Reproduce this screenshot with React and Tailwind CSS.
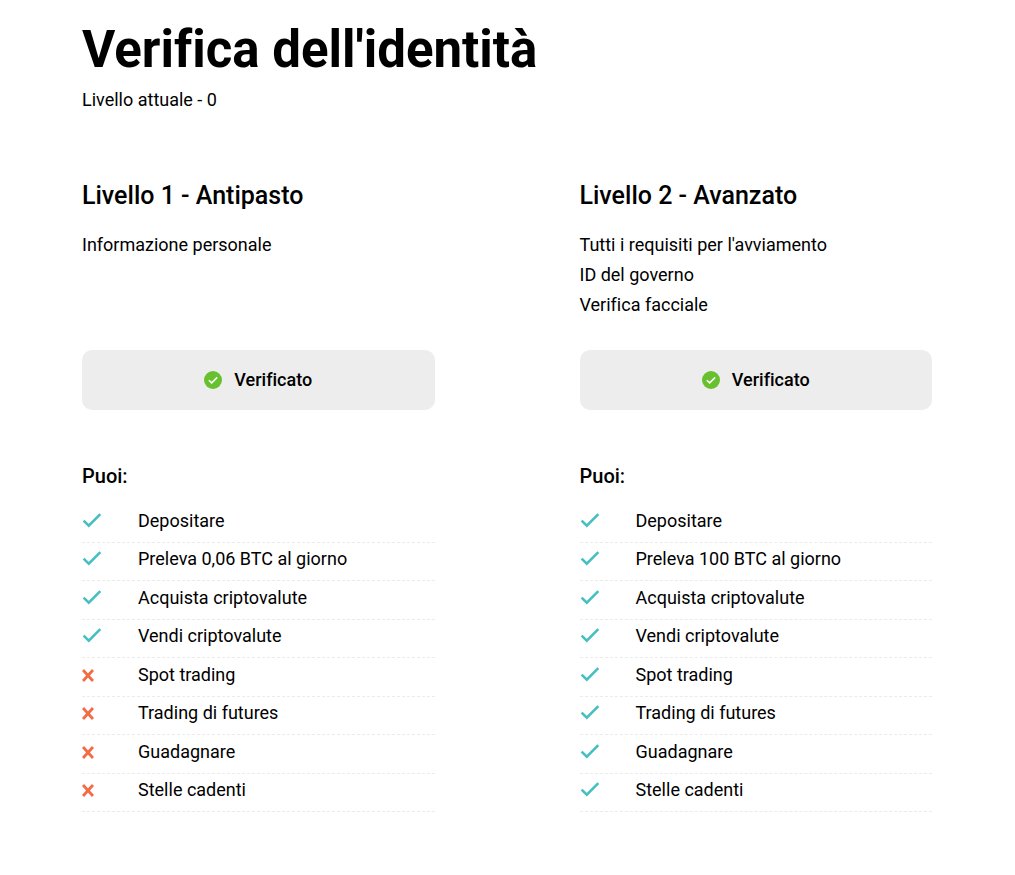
import React from 'react';

const levels = [
  {
    title: 'Livello 1 - Antipasto',
    requirements: ['Informazione personale'],
    features: [
      { name: 'Depositare', allowed: true },
      { name: 'Preleva 0,06 BTC al giorno', allowed: true },
      { name: 'Acquista criptovalute', allowed: true },
      { name: 'Vendi criptovalute', allowed: true },
      { name: 'Spot trading', allowed: false },
      { name: 'Trading di futures', allowed: false },
      { name: 'Guadagnare', allowed: false },
      { name: 'Stelle cadenti', allowed: false },
    ],
  },
  {
    title: 'Livello 2 - Avanzato',
    requirements: ["Tutti i requisiti per l'avviamento", 'ID del governo', 'Verifica facciale'],
    features: [
      { name: 'Depositare', allowed: true },
      { name: 'Preleva 100 BTC al giorno', allowed: true },
      { name: 'Acquista criptovalute', allowed: true },
      { name: 'Vendi criptovalute', allowed: true },
      { name: 'Spot trading', allowed: true },
      { name: 'Trading di futures', allowed: true },
      { name: 'Guadagnare', allowed: true },
      { name: 'Stelle cadenti', allowed: true },
    ],
  },
];

const CheckIcon = () => (
  <svg className="h-4 w-5" viewBox="0 0 20 16" fill="none" stroke="#45bfc3" strokeWidth="2.6" aria-hidden="true">
    <path d="M1.6 7.6l5.2 5L18.3 1.2" />
  </svg>
);

const CrossIcon = () => (
  <svg className="h-4 w-3" viewBox="0 0 12 16" fill="none" stroke="#f26b43" strokeWidth="2.8" aria-hidden="true">
    <path d="M1 3l10 11M11 3L1 14" />
  </svg>
);

const VerifiedIcon = () => (
  <svg className="h-[18px] w-[18px]" viewBox="0 0 18 18" fill="none" aria-hidden="true">
    <circle cx="9" cy="9" r="9" fill="#67c12e" />
    <path d="M4.8 9.2l2.9 2.7L13.2 6.4" stroke="#fff" strokeWidth="1.5" />
  </svg>
);

const Level = ({ level }) => (
  <section className="flex flex-col">
    <h2 className="text-[25px] leading-9 font-medium">{level.title}</h2>
    <ul className="mt-4 min-h-[90px] text-lg leading-[30px]">
      {level.requirements.map((item) => (
        <li key={item}>{item}</li>
      ))}
    </ul>
    <button
      type="button"
      className="mt-[30px] flex h-[60px] w-full items-center justify-center gap-3 rounded-[10px] bg-[#ededed] text-lg font-medium"
    >
      <VerifiedIcon />
      Verificato
    </button>
    <h3 className="mt-[51px] text-xl leading-[30px] font-medium">Puoi:</h3>
    <ul className="mt-[13px] grid h-[308px] grid-rows-8 text-lg leading-6">
      {level.features.map((feature) => (
        <li key={feature.name} className="flex items-center border-b border-dashed border-[#ebebeb] pb-1">
          <span className="w-14 shrink-0">{feature.allowed ? <CheckIcon /> : <CrossIcon />}</span>
          {feature.name}
        </li>
      ))}
    </ul>
  </section>
);

export default function App() {
  return (
    <main className="min-h-screen bg-white pt-5 pr-[83px] pb-16 pl-[82px] font-['Roboto',sans-serif] text-black [font-variant-ligatures:none]">
      <h1 className="text-[51px] leading-[60px] font-bold">Verifica dell'identità</h1>
      <p className="mt-[5px] text-lg leading-[30px]">Livello attuale - 0</p>
      <div className="mt-[63px] grid grid-cols-2 gap-[145px]">
        {levels.map((level) => (
          <Level key={level.title} level={level} />
        ))}
      </div>
    </main>
  );
}
